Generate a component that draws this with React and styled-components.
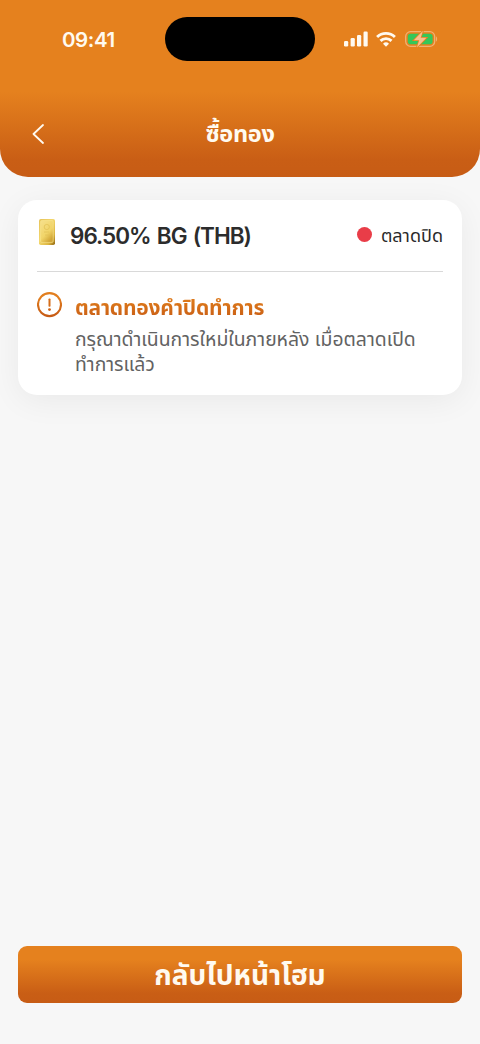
import React from 'react';
import styled, { createGlobalStyle } from 'styled-components';

const GlobalStyle = createGlobalStyle`
    * {
        box-sizing: border-box;
    }

    body {
        margin: 0;
        background: #f7f7f7;
        font-family: Inter, "Noto Sans Thai", "Noto Sans", sans-serif;
    }
`

const Screen = styled.div`
    display: flex;
    flex-direction: column;
    width: 480px;
    height: 1044px;
    overflow: hidden;
    background: #f7f7f7;
`

const Header = styled.header`
    height: 177px;
    flex-shrink: 0;
    border-radius: 0 0 28px 28px;
    background: linear-gradient(180deg, #e5811e 0, #e5811e 92px, #c95e15 160px, #c75c15 177px);
    color: #fffaf0;
`

const StatusBar = styled.div`
    display: grid;
    grid-template-columns: 165px 150px 165px;
    height: 77px;
    padding-top: 16px;
`

const Time = styled.span`
    padding: 11px 0 0 62px;
    font-size: 20.5px;
    line-height: 25px;
    font-weight: 600;
    letter-spacing: -0.4px;
`

const Island = styled.div`
    height: 44px;
    margin-top: 0.7px;
    border-radius: 22px;
    background: #000;
`

const StatusIcons = styled.div`
    display: flex;
    align-items: center;
    height: 46px;
    padding-left: 29px;
    gap: 8px;
`

const TitleBar = styled.div`
    display: grid;
    grid-template-columns: 48px 1fr 48px;
    align-items: center;
    height: 100px;
    padding: 0 14px;
`

const BackButton = styled.button`
    display: flex;
    justify-content: center;
    padding: 0 0 0 1px;
    margin-top: 14px;
    border: 0;
    background: none;
    color: inherit;
`

const Title = styled.h1`
    margin: 14px 0 0;
    text-align: center;
    font-size: 23.5px;
    line-height: 36px;
    font-weight: 700;
    letter-spacing: -0.3px;
`

const Card = styled.section`
    margin: 23px 18px 0;
    height: 195px;
    padding: 0 19px;
    border-radius: 19px;
    background: #fff;
    box-shadow: 0 6px 32px rgba(0, 0, 0, 0.06);
`

const AssetRow = styled.div`
    display: flex;
    align-items: center;
    height: 72px;
    border-bottom: 1px solid #d9d9d9;
`

const AssetName = styled.h2`
    flex: 1;
    margin: 0 0 0 14px;
    font-size: 22.5px;
    line-height: 28px;
    font-weight: 600;
    letter-spacing: -1px;
    word-spacing: 1.5px;
    color: #2c2c2c;
`

const Dot = styled.span`
    width: 15px;
    height: 15px;
    margin: 0 9px 2px 0;
    border-radius: 50%;
    background: #e93d48;
`

const MarketStatus = styled.span`
    font-size: 18px;
    line-height: 28px;
    color: #292929;
`

const Notice = styled.div`
    display: flex;
    gap: 13px;
    padding-top: 20px;
`

const NoticeTitle = styled.h3`
    margin: 0;
    font-size: 21px;
    line-height: 32px;
    font-weight: 700;
    letter-spacing: -0.2px;
    background: linear-gradient(180deg, #dc781b 30%, #c95e15 80%);
    background-clip: text;
    color: transparent;
`

const NoticeText = styled.p`
    margin: 3px 0 0;
    font-size: 19.35px;
    line-height: 25px;
    color: #626262;
    white-space: nowrap;
`

const HomeButton = styled.button`
    height: 57px;
    margin: auto 18px 41px;
    padding: 3px 0 0;
    flex-shrink: 0;
    border: 0;
    border-radius: 9px;
    background: linear-gradient(180deg, #e5811e 0, #e5811e 24%, #c95e15 83%, #c75c15 100%);
    color: #fffaf0;
    font-family: inherit;
    font-size: 28px;
    font-weight: 700;
`

const Signal = () => (
    <svg width="24" height="16" viewBox="0 0 24 16" fill="currentColor">
        <rect x="0" y="10" width="4.2" height="5.5" rx="1.2"/>
        <rect x="6.6" y="7" width="4.2" height="8.5" rx="1.2"/>
        <rect x="13" y="4" width="4.2" height="11.5" rx="1.2"/>
        <rect x="19.5" y="0.5" width="4.2" height="15" rx="1.2"/>
    </svg>
)

const Wifi = () => (
    <svg width="20" height="16" viewBox="0 0 20 16" fill="none" stroke="currentColor" strokeWidth="2.9">
        <path d="M1.1 6a12.8 12.8 0 0 1 17.8 0"/>
        <path d="M4.5 9.9a7.8 7.8 0 0 1 11 0"/>
        <path d="M7 12.7a4.3 4.3 0 0 1 6 0l-3 3z" fill="currentColor" stroke="none"/>
    </svg>
)

const Battery = () => (
    <svg width="34" height="18" viewBox="0 0 34 18">
        <rect x="1.7" y="1.7" width="29" height="14.6" rx="4.8" fill="none" stroke="#f1b071" strokeWidth="1.3"/>
        <rect x="3.8" y="3.8" width="24.8" height="10.4" rx="2.8" fill="#35c759"/>
        <path d="M32 6.5c1.5.6 1.5 4.4 0 5z" fill="#f1b071"/>
        <path d="M19 .8 9.8 10.2h5.4l-2.3 7.2 9.6-9.6h-5.8z" fill="#f7c08e" stroke="#e5811e" strokeWidth="1.6" paintOrder="stroke"/>
    </svg>
)

const GoldSvg = styled.svg`
    margin-bottom: 8px;
`

const GoldBar = () => (
    <GoldSvg width="19" height="28" viewBox="0 0 19 28">
        <defs>
            <linearGradient id="gold" x1="0" y1="0" x2="1" y2="1">
                <stop offset="0" stopColor="#e6c35a"/>
                <stop offset="0.45" stopColor="#f3d76d"/>
                <stop offset="0.78" stopColor="#dcb540"/>
                <stop offset="1" stopColor="#8e6410"/>
            </linearGradient>
            <linearGradient id="goldFace" x1="0" y1="0" x2="0.6" y2="1">
                <stop offset="0" stopColor="#f6e08c"/>
                <stop offset="0.65" stopColor="#f1d468"/>
                <stop offset="1" stopColor="#d1a637"/>
            </linearGradient>
        </defs>
        <rect x="2" y="1" width="16" height="26" rx="1.8" fill="url(#gold)"/>
        <rect x="3.6" y="2.6" width="12.6" height="21.8" rx="1.2" fill="url(#goldFace)" stroke="#f8e594" strokeWidth="0.6"/>
        <circle cx="9.8" cy="9" r="2.6" fill="none" stroke="#e2c157" strokeWidth="0.8"/>
        <path d="M7 14h5M8 17h4" stroke="#e2c157" strokeWidth="0.8"/>
    </GoldSvg>
)

const Warning = () => (
    <svg width="25" height="26" viewBox="0 0 25 26">
        <defs>
            <linearGradient id="warn" x1="0" y1="0" x2="0" y2="26" gradientUnits="userSpaceOnUse">
                <stop offset="0.2" stopColor="#e27e1e"/>
                <stop offset="0.9" stopColor="#c75c15"/>
            </linearGradient>
        </defs>
        <circle cx="12.5" cy="12.6" r="11.5" fill="none" stroke="url(#warn)" strokeWidth="2.1"/>
        <rect x="11.5" y="6.4" width="2" height="8.4" rx="0.8" fill="#d56d19"/>
        <circle cx="12.5" cy="17.6" r="1.4" fill="#cc6216"/>
    </svg>
)

const App = () => {
    return(
        <Screen>
            <GlobalStyle/>
            <Header>
                <StatusBar>
                    <Time>09:41</Time>
                    <Island/>
                    <StatusIcons>
                        <Signal/>
                        <Wifi/>
                        <Battery/>
                    </StatusIcons>
                </StatusBar>
                <TitleBar>
                    <BackButton aria-label="Back">
                        <svg width="13" height="20" viewBox="0 0 13 20" fill="none" stroke="currentColor" strokeWidth="1.8" strokeLinecap="round" strokeLinejoin="round">
                            <path d="M11 1 1.5 10l9.5 9"/>
                        </svg>
                    </BackButton>
                    <Title>ซื้อทอง</Title>
                </TitleBar>
            </Header>
            <Card>
                <AssetRow>
                    <GoldBar/>
                    <AssetName>96.50% BG (THB)</AssetName>
                    <Dot/>
                    <MarketStatus>ตลาดปิด</MarketStatus>
                </AssetRow>
                <Notice>
                    <Warning/>
                    <div>
                        <NoticeTitle>ตลาดทองคำปิดทำการ</NoticeTitle>
                        <NoticeText>กรุณาดำเนินการใหม่ในภายหลัง เมื่อตลาดเปิด<br/>ทำการแล้ว</NoticeText>
                    </div>
                </Notice>
            </Card>
            <HomeButton>กลับไปหน้าโฮม</HomeButton>
        </Screen>
    );
}

export default App
